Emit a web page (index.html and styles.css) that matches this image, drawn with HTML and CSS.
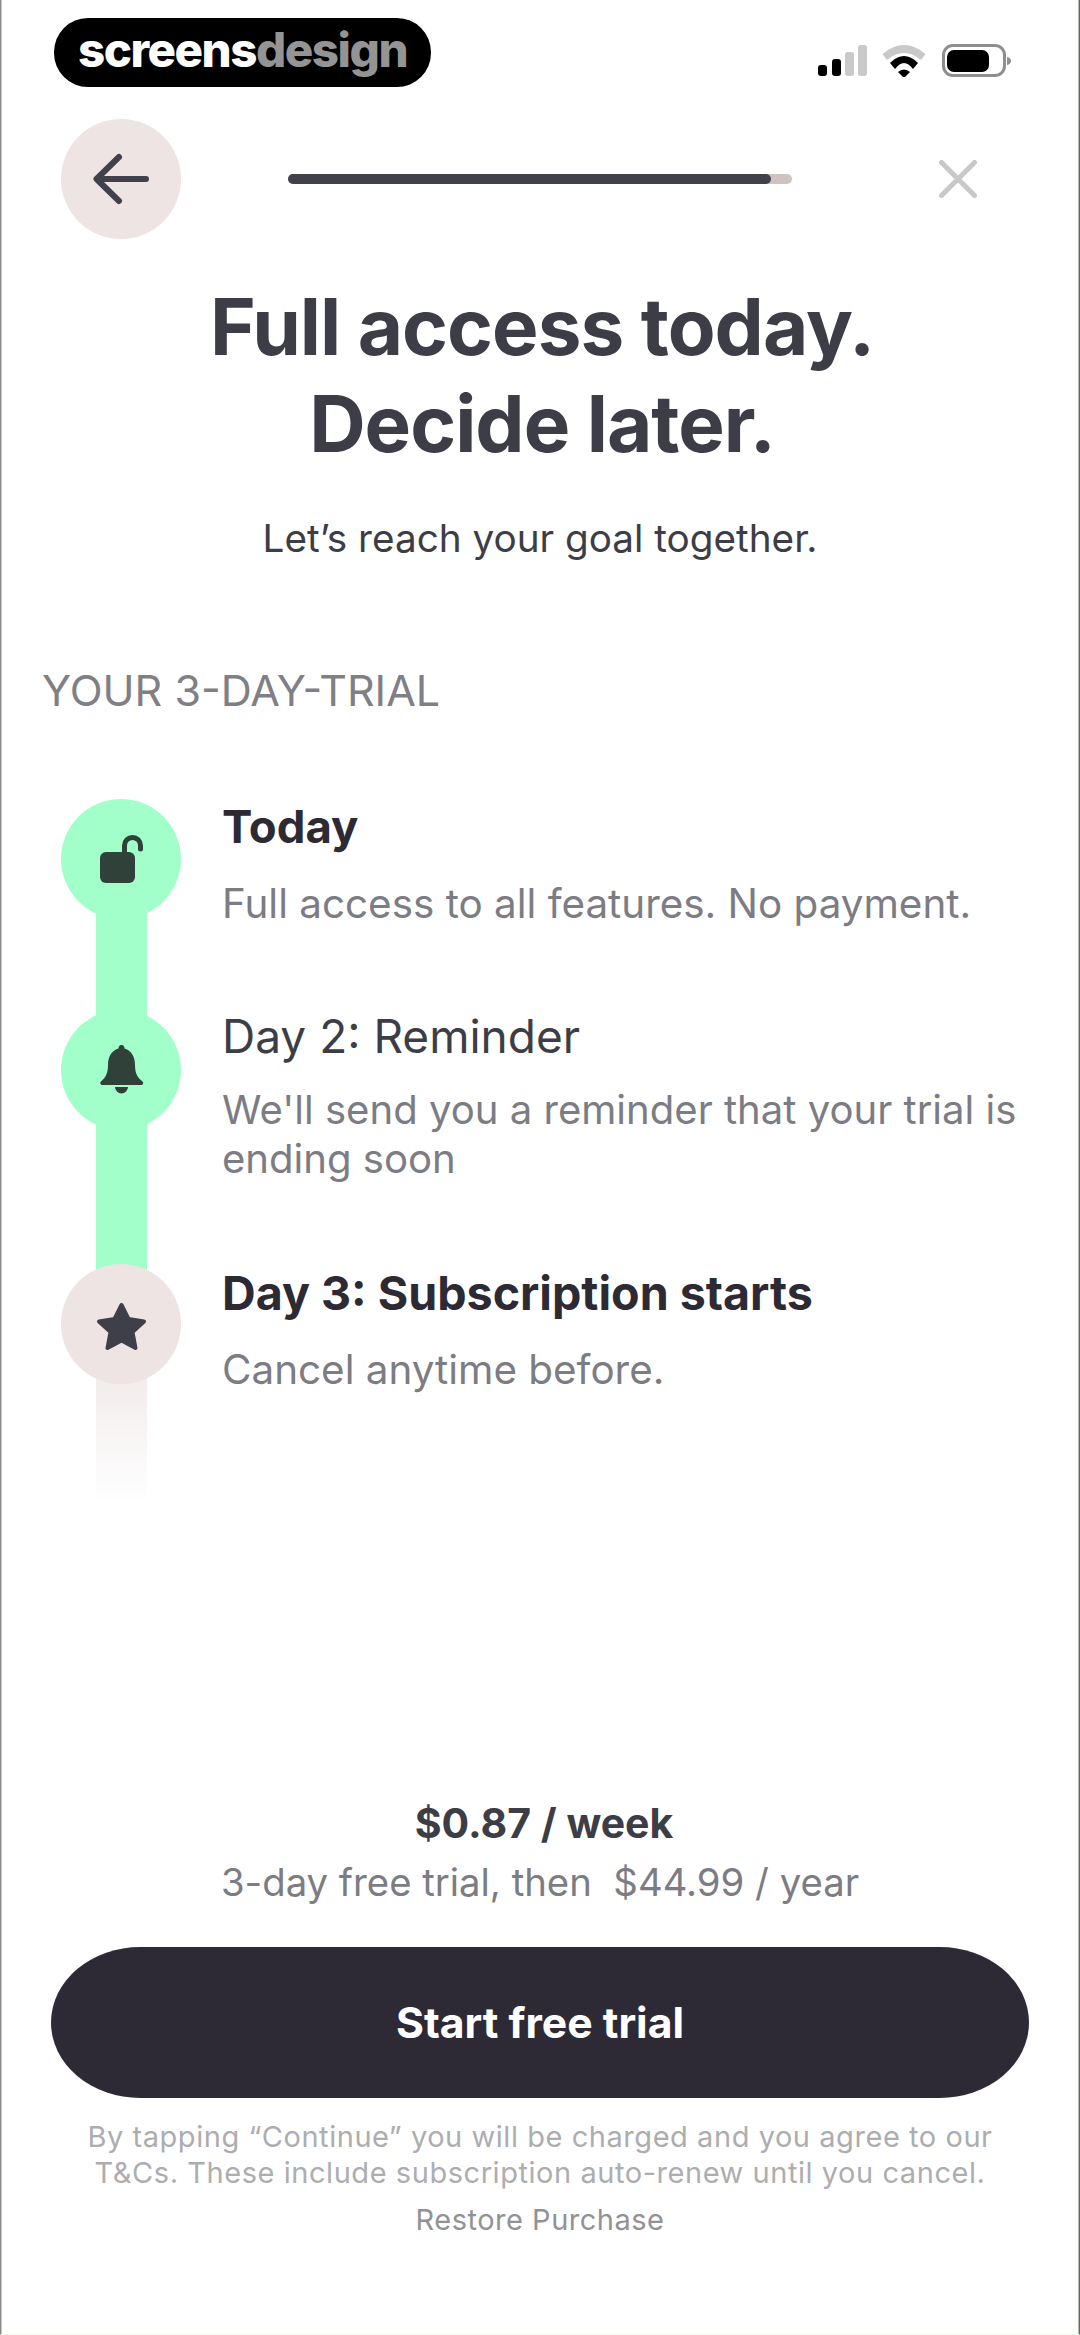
FILE: index.html
```html
<!DOCTYPE html>
<html lang="en">
<head>
<meta charset="utf-8">
<title>Full access today</title>
<link rel="stylesheet" href="styles.css">
</head>
<body>
<div class="app">
  <header class="status">
    <div class="logo"><span class="logo-a">screens</span><span class="logo-b">design</span></div>
    <svg class="status-icons" width="193" height="33" viewBox="0 0 193 33">
      <rect x="0" y="21" width="9" height="11" rx="3" fill="#000"/>
      <rect x="14" y="15" width="9" height="17" rx="3" fill="#000"/>
      <rect x="27" y="8" width="9" height="24" rx="3" fill="#c9c9c9"/>
      <rect x="40" y="1" width="9" height="31" rx="3" fill="#c9c9c9"/>
      <path d="M64.5 10Q86 -8 107.5 10L103 16Q86 2 69 16Z" fill="#c9c9c9"/>
      <path d="M72 19Q86 5 100 19L95 25Q86 13 77 25Z" fill="#000"/>
      <path d="M80 28Q86 23 92 28L86 34Z" fill="#000"/>
      <rect x="125.5" y="1.5" width="61" height="30" rx="9.5" fill="#fff" stroke="#8e8e8e" stroke-width="3"/>
      <rect x="129" y="6" width="42" height="22" rx="7" fill="#000"/>
      <path d="M189 13c2.500 .5 4 2 4 4s-1.500 3.500-4 4z" fill="#8e8e8e"/>
    </svg>
  </header>

  <nav class="topbar">
    <button class="back" aria-label="Back">
      <svg width="120" height="120" viewBox="0 0 120 120"><path d="M85 60H36M58 38L35.500 60L58 82" fill="none" stroke="#41414c" stroke-width="6" stroke-linecap="round" stroke-linejoin="round"/></svg>
    </button>
    <div class="progress"><div class="progress-fill"></div></div>
    <svg class="close" width="38" height="38" viewBox="0 0 38 38"><path d="M2.500 2.500L35.500 35.500M35.500 2.500L2.500 35.500" stroke="#c8c8c8" stroke-width="5" stroke-linecap="round"/></svg>
  </nav>

  <h1 class="title">Full access today.<br>Decide later.</h1>
  <p class="subtitle">Let’s reach your goal together.</p>
  <h2 class="section">YOUR 3-DAY-TRIAL</h2>

  <ol class="steps">
    <li class="step step-one">
      <div class="marker marker-green">
        <svg width="120" height="120" viewBox="0 0 120 120"><rect x="39" y="53" width="35" height="31" rx="6" fill="#2f4138"/><path d="M63.500 55V46.500a8 8 0 0 1 16 0V50" fill="none" stroke="#2f4138" stroke-width="5" stroke-linecap="round"/></svg>
      </div>
      <div class="step-text">
        <h3 class="step-title strong">Today</h3>
        <p class="step-desc">Full access to all features. No payment.</p>
      </div>
    </li>
    <li class="step step-two">
      <div class="marker marker-green">
        <svg width="120" height="120" viewBox="0 0 120 120"><path d="M60.500 35c-2 0-3 1.500-3 3.500C50 41 47 47 47 55c0 8-2 12-7 16.500c-1.500 1.500-.5 3.500 1.500 3.500H80c2 0 3-2 1.500-3.500C76 67 74 63 74 55C74 47 71 41 63.500 38.500C63.500 36.500 62.500 35 60.500 35zM54 77H67a6.500 6.500 0 0 1-13 0z" fill="#2f4138"/></svg>
      </div>
      <div class="step-text">
        <h3 class="step-title">Day 2: Reminder</h3>
        <p class="step-desc">We'll send you a reminder that your trial is ending soon</p>
      </div>
    </li>
    <li class="step step-three">
      <div class="marker marker-beige">
        <svg width="120" height="120" viewBox="0 0 120 120"><polygon points="60.500,41 67.500,55 83,57.500 71.500,68 74.500,84 60.500,76.500 46.500,84 49.500,68 38,57.500 53.500,55" fill="#3f3f4a" stroke="#3f3f4a" stroke-width="4" stroke-linejoin="round"/></svg>
      </div>
      <div class="step-text">
        <h3 class="step-title strong">Day 3: Subscription starts</h3>
        <p class="step-desc">Cancel anytime before.</p>
      </div>
    </li>
  </ol>

  <footer class="footer">
    <p class="price">$0.87 / week</p>
    <p class="price-note">3-day free trial, then&nbsp; $44.99 / year</p>
    <button class="cta">Start free trial</button>
    <p class="legal">By tapping “Continue” you will be charged and you agree to our<br>T&amp;Cs. These include subscription auto-renew until you cancel.</p>
    <p class="restore">Restore Purchase</p>
  </footer>
</div>
</body>
</html>
```
FILE: styles.css
```css
* { box-sizing: border-box; }
html, body { margin: 0; padding: 0; background: #fff; }
body { font-family: Inter, "Liberation Sans", sans-serif; }
h1, h2, h3, p, ol { margin: 0; padding: 0; }
ol { list-style: none; }
button { border: 0; padding: 0; font: inherit; cursor: pointer; }

.app {
  width: 1080px;
  height: 2335px;
  display: flex;
  flex-direction: column;
  border-left: 1px solid #8a8a8a;
  border-right: 1px solid #5f6a60;
  border-bottom: 1px solid #ebfeee;
  padding: 0 1px;
  box-shadow: inset 1px 0 #c8c8c8, inset -1px 0 #b4bcb4;
  overflow: hidden;
}

.status {
  display: flex;
  justify-content: space-between;
  align-items: flex-start;
  padding: 18px 67px 0 52px;
  height: 119px;
}
.logo {
  width: 377px;
  height: 69px;
  border-radius: 34px;
  background: #000;
  display: flex;
  align-items: center;
  justify-content: center;
  font-size: 47.500px;
  font-weight: 800;
  letter-spacing: -1.5px;
  line-height: 1;
  padding-bottom: 5px;
}
.logo-a { color: #fff; }
.logo-b { color: #949494; }
.status-icons { margin-top: 26px; }

.topbar {
  display: flex;
  align-items: center;
  padding: 0 101px 0 59px;
  height: 120px;
}
.back {
  width: 120px;
  height: 120px;
  border-radius: 50%;
  background: #ede4e3;
  display: flex;
}
.progress {
  width: 504px;
  height: 10px;
  margin-left: 107px;
  border-radius: 5px;
  background: #cfc3bd;
}
.progress-fill {
  width: 483px;
  height: 10px;
  border-radius: 5px;
  background: #41414c;
}
.close { margin-left: auto; }

.title {
  margin-top: 39px;
  padding-left: 4px;
  text-align: center;
  font-size: 78.200px;
  line-height: 97px;
  font-weight: 700;
  letter-spacing: -1px;
  color: #3d3d48;
}
.subtitle {
  margin-top: 41px;
  text-align: center;
  font-size: 38.700px;
  line-height: 50px;
  color: #3d3d46;
}
.section {
  margin-top: 102px;
  padding-left: 40px;
  font-size: 43px;
  line-height: 50px;
  font-weight: 400;
  color: #7f7f85;
}

.steps {
  margin-top: 84px;
  padding-left: 59px;
  display: flex;
  flex-direction: column;
}
.step { display: flex; align-items: flex-start; position: relative; }
.step-one { height: 211px; }
.step-two { height: 254px; }
.step-three { height: 239px; }

.step::before {
  content: "";
  position: absolute;
  left: 35px;
  width: 51px;
  top: 60px;
  bottom: -60px;
  background: #a2ffc9;
}
.step-three::before {
  bottom: 0;
  background: linear-gradient(#ede4e3, #fff);
}
.marker {
  position: relative;
  flex: none;
  width: 120px;
  height: 120px;
  border-radius: 50%;
}
.marker svg { display: block; }
.marker-green { background: #a2ffc9; }
.marker-beige { background: #ede4e3; }

.step-text { margin-left: 41px; padding-top: 2px; }
.step-title {
  font-size: 46px;
  line-height: 52px;
  font-weight: 400;
  color: #3d3d46;
}
.step-title.strong { font-weight: 700; color: #2d2a34; font-size: 46.600px; }
.step-one .step-title.strong { font-size: 45.500px; }
.step-desc {
  margin-top: 26px;
  font-size: 40.400px;
  line-height: 49px;
  color: #7c7c84;
  max-width: 810px;
}
.step-two .step-title { margin-top: -2px; }
.step-two .step-desc { margin-top: 23px; font-size: 40.100px; }
.step-three .step-text { padding-top: 3px; }

.footer {
  margin-top: auto;
  display: flex;
  flex-direction: column;
  align-items: center;
  padding-bottom: 96px;
}
.price {
  font-size: 41px;
  line-height: 50px;
  font-weight: 700;
  color: #3d3d46;
  padding-left: 8px;
}
.price-note {
  margin-top: 9px;
  font-size: 38.300px;
  line-height: 50px;
  color: #7c7c84;
}
.cta {
  margin-top: 40px;
  width: 978px;
  height: 151px;
  border-radius: 90px / 76px;
  background: #2e2a35;
  color: #fff;
  font-size: 42.700px;
  font-weight: 700;
}
.legal {
  margin-top: 21px;
  text-align: center;
  font-size: 29px;
  line-height: 36px;
  letter-spacing: 0.55px;
  color: #adadb0;
}
.restore {
  margin-top: 11px;
  font-size: 29px;
  line-height: 36px;
  letter-spacing: 0.5px;
  color: #929296;
}
```
